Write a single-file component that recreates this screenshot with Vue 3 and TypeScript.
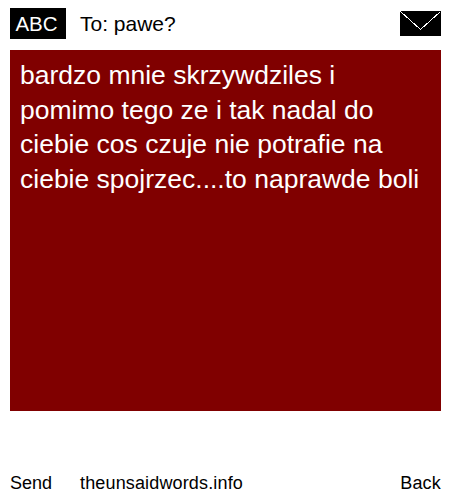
<script setup lang="ts">
const lines: string[] = [
  'bardzo mnie skrzywdziles i',
  'pomimo tego ze i tak nadal do',
  'ciebie cos czuje nie potrafie na',
  'ciebie spojrzec....to naprawde boli',
]
</script>

<template>
  <div class="screen">
    <header class="top">
      <span class="abc">ABC</span>
      <span class="to">To: pawe?</span>
      <svg class="env" width="41" height="25" viewBox="0 0 41 25" shape-rendering="crispEdges">
        <rect width="41" height="25" fill="#000" />
        <path d="M0.5 0.5 L20.5 18.5 L40.5 0.5" fill="none" stroke="#fff" stroke-width="1" />
      </svg>
    </header>
    <main class="msg">
      <div v-for="l in lines" :key="l">{{ l }}</div>
    </main>
    <footer class="bottom">
      <span class="send">Send</span>
      <span class="site">theunsaidwords.info</span>
      <span class="back">Back</span>
    </footer>
  </div>
</template>

<style>
html, body { margin: 0; background: #fff; }
</style>

<style scoped>
.screen {
  width: 450px;
  height: 500px;
  box-sizing: border-box;
  padding: 8px 9px 0 10px;
  display: flex;
  flex-direction: column;
  font-family: "Liberation Sans", Arial, sans-serif;
  color: #000;
}
.top {
  display: flex;
  align-items: center;
  height: 31px;
}
.abc {
  width: 56px;
  height: 31px;
  box-sizing: border-box;
  padding-right: 3px;
  background: #000;
  color: #fff;
  font-size: 20.5px;
  line-height: 31px;
  text-align: center;
}
.to {
  margin-left: 14px;
  font-size: 21px;
  flex: 1;
}
.env { display: block; }
.msg {
  margin-top: 11px;
  height: 361px;
  box-sizing: border-box;
  background: #800000;
  color: #fff;
  padding: 8px 9px 8px 10px;
  font-size: 26.5px;
  line-height: 34.67px;
  white-space: nowrap;
}
.bottom {
  margin-top: 60px;
  display: flex;
  font-size: 18px;
  line-height: 24px;
}
.send { width: 70px; }
.site { flex: 1; letter-spacing: 0.15px; }
.back { letter-spacing: 0.2px; }
</style>
